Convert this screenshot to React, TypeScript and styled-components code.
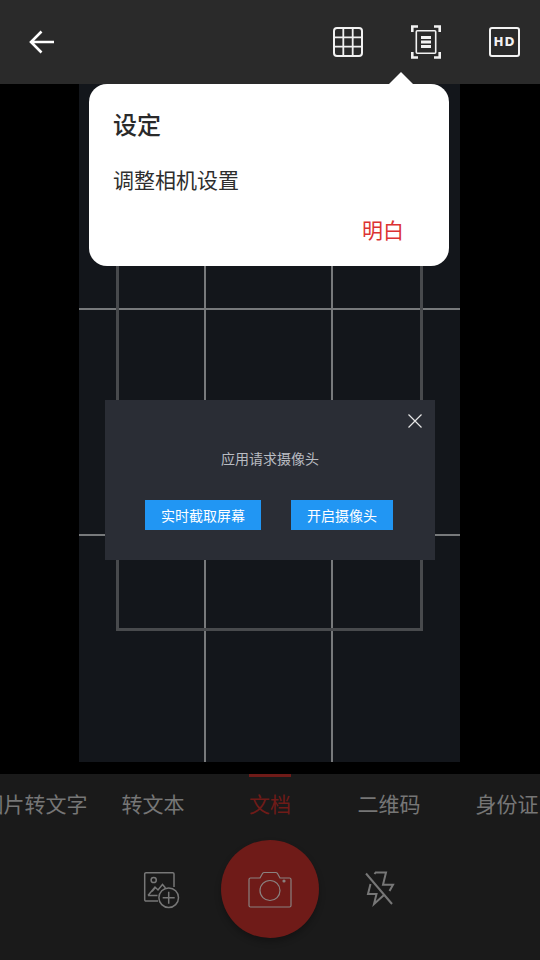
import styled, { createGlobalStyle } from "styled-components";

const tabs = ["图片转文字", "转文本", "文档", "二维码", "身份证"];
const activeTab = "文档";

const App = () => {
  return (
    <>
      <GlobalStyle />
      <Page>
        <TopBar>
          <IconButton aria-label="返回">
            <svg width="26" height="26" viewBox="0 0 26 26" fill="none" stroke="#fff" strokeWidth="2.6">
              <path d="M2 13h23M12.5 2.5 2 13l10.500 10.500" />
            </svg>
          </IconButton>
          <TopActions>
            <svg width="32" height="32" viewBox="0 0 32 32" fill="none" stroke="#f2f2f2" strokeWidth="2">
              <rect x="2" y="2" width="28" height="28" rx="3" />
              <path d="M11.300 2v28M20.700 2v28M2 11.300h28M2 20.700h28" strokeWidth="1.800" />
            </svg>
            <svg width="32" height="34" viewBox="0 0 32 34" fill="none" stroke="#f2f2f2">
              <path d="M2.300 7V1.500H8M24 1.500h5.700V7M2.300 27v5.500H8M24 32.500h5.700V27" strokeWidth="2.600" />
              <rect x="6.300" y="5.800" width="19.400" height="22.400" rx="1" strokeWidth="1.600" />
              <path d="M11 12.500h10M11 17h10M11 21.500h10" strokeWidth="2.800" />
            </svg>
            <HdBadge>HD</HdBadge>
          </TopActions>
        </TopBar>

        <Stage>
          <Frame>
            <ThirdsGrid>
              {Array.from({ length: 9 }, (_, i) => (
                <GridCell key={i} $col={i % 3} $row={Math.floor(i / 3)} />
              ))}
            </ThirdsGrid>
            <DocOutline />
          </Frame>
        </Stage>

        <BottomBar>
          <TabRow>
            {tabs.map((tab) => (
              <Tab key={tab} $active={tab === activeTab}>
                {tab}
              </Tab>
            ))}
          </TabRow>
          <Controls>
            <GalleryIcon width="38" height="40" viewBox="0 0 38 40" fill="none" stroke="#777" strokeWidth="1.500">
              <path d="M15 32H3a1.300 1.300 0 0 1-1.300-1.300V5A1.300 1.300 0 0 1 3 3.700h26.700A1.300 1.300 0 0 1 31 5v13" />
              <circle cx="10.700" cy="11" r="2.600" />
              <path d="M5 26.500 12 18l3 3 4.500-5.500 3 3.500M5 26.500h9.500M9 22.500l3-3.500" />
              <circle cx="25.700" cy="28.700" r="9.800" fill="#1a1a1a" />
              <path d="M25.700 22.700v12M19.700 28.700h12" />
            </GalleryIcon>
            <CaptureButton aria-label="拍照">
              <svg width="44" height="37" viewBox="0 0 44 37" fill="none" stroke="#8a8280" strokeWidth="1.200">
                <path d="M2.500 7H12l2.500-4.500c.4-.7 1-1 1.800-1h11.400c.8 0 1.400.3 1.800 1L32 7h9.500A1.500 1.500 0 0 1 43 8.500v26a1.500 1.500 0 0 1-1.500 1.500h-39A1.500 1.500 0 0 1 1 34.500v-26A1.500 1.500 0 0 1 2.500 7Z" />
                <circle cx="22" cy="19.500" r="10" />
                <circle cx="36" cy="10" r="1" fill="#8a8280" />
              </svg>
            </CaptureButton>
            <FlashIcon width="30" height="36" viewBox="0 0 30 36" fill="none" stroke="#777" strokeWidth="2">
              <path d="M1 2.500 27 33" />
              <path d="M9.500 3l1.200-1.500H21L18 13.700h10l-3.500 6.300M19 24 9 33l2.500-10H3l2.500-10" />
            </FlashIcon>
          </Controls>
        </BottomBar>

        <Popover>
          <PopoverTitle>设定</PopoverTitle>
          <PopoverText>调整相机设置</PopoverText>
          <PopoverAction>明白</PopoverAction>
        </Popover>

        <Dialog>
          <CloseButton aria-label="关闭">
            <svg width="16" height="16" viewBox="0 0 16 16" fill="none" stroke="#e6e6e6" strokeWidth="1.200">
              <path d="M1.500 1.500l13 13M14.500 1.500l-13 13" />
            </svg>
          </CloseButton>
          <DialogText>应用请求摄像头</DialogText>
          <DialogActions>
            <DialogButton>实时截取屏幕</DialogButton>
            <DialogButton>开启摄像头</DialogButton>
          </DialogActions>
        </Dialog>
      </Page>
    </>
  );
};

export default App;

const GlobalStyle = createGlobalStyle`
  html, body {
    margin: 0;
    padding: 0;
    background: #000;
  }
  * {
    box-sizing: border-box;
  }
  body {
    font-family: "Noto Sans CJK SC", "Noto Sans", sans-serif;
  }
`;

const Page = styled.div`
  position: relative;
  display: flex;
  flex-direction: column;
  width: 540px;
  height: 960px;
  overflow: hidden;
  background-color: #000;
`;

const TopBar = styled.header`
  display: flex;
  align-items: center;
  justify-content: space-between;
  flex: 0 0 84px;
  padding: 0 20px 0 29px;
  background-color: #2a2a2a;
`;

const IconButton = styled.div`
  display: flex;
  align-items: center;
  justify-content: center;
`;

const TopActions = styled.div`
  display: flex;
  align-items: center;
  gap: 46px;
`;

const HdBadge = styled.div`
  display: flex;
  align-items: center;
  justify-content: center;
  width: 31px;
  height: 30px;
  margin-left: 1px;
  border: 2px solid #f2f2f2;
  border-radius: 3px;
  color: #f2f2f2;
  font-family: "DejaVu Sans", sans-serif;
  font-size: 12px;
  font-weight: 700;
  letter-spacing: 1px;
`;

const Stage = styled.main`
  display: flex;
  justify-content: center;
  flex: 1;
  padding: 0 80px 12px 79px;
`;

const Frame = styled.div`
  position: relative;
  width: 381px;
  height: 100%;
  background-color: #13161b;
`;

const ThirdsGrid = styled.div`
  display: grid;
  grid-template-columns: 127px 127px 127px;
  grid-template-rows: 226px 226px 226px;
  height: 100%;
`;

const GridCell = styled.div<{ $col: number; $row: number }>`
  border-right: ${({ $col }) => ($col < 2 ? "2px solid #77797b" : "none")};
  border-bottom: ${({ $row }) => ($row < 2 ? "2px solid #77797b" : "none")};
`;

const DocOutline = styled.div`
  position: absolute;
  top: 130px;
  left: 37px;
  width: 307px;
  height: 417px;
  border: 3px solid #484a4d;
`;

const BottomBar = styled.footer`
  display: flex;
  flex-direction: column;
  flex: 0 0 186px;
  background-color: #1a1a1a;
`;

const TabRow = styled.nav`
  display: flex;
  justify-content: center;
  height: 66px;
`;

const Tab = styled.div<{ $active: boolean }>`
  display: flex;
  justify-content: center;
  flex: 0 0 118px;
  position: relative;
  padding-top: 14px;
  padding-left: ${({ $active }) => ($active ? "0" : "2px")};
  color: ${({ $active }) => ($active ? "#6f1b18" : "#767676")};
  font-size: 21px;
  line-height: 30px;
  white-space: nowrap;

  &::before {
    content: "";
    display: ${({ $active }) => ($active ? "block" : "none")};
    position: absolute;
    top: 0;
    left: 38px;
    width: 42px;
    height: 3px;
    background-color: #6f1b18;
  }
`;

const Controls = styled.div`
  display: grid;
  grid-template-columns: 1fr 98px 1fr;
  align-items: center;
  height: 98px;
`;

const GalleryIcon = styled.svg`
  justify-self: end;
  margin-right: 40px;
`;

const FlashIcon = styled.svg`
  justify-self: start;
  margin-left: 46px;
`;

const CaptureButton = styled.div`
  display: flex;
  align-items: center;
  justify-content: center;
  width: 98px;
  height: 98px;
  border-radius: 50%;
  background-color: #6f1b18;
  box-shadow: 0 4px 6px rgba(0, 0, 0, 0.25);
`;

const Popover = styled.div`
  position: absolute;
  top: 84px;
  left: 89px;
  display: flex;
  flex-direction: column;
  width: 360px;
  height: 182px;
  padding: 23px 25px 0 24px;
  border-radius: 18px;
  background-color: #fff;

  &::before {
    content: "";
    position: absolute;
    top: -12px;
    left: 300px;
    width: 24px;
    height: 12px;
    background-color: #fff;
    clip-path: polygon(50% 0, 100% 100%, 0 100%);
  }
`;

const PopoverTitle = styled.div`
  color: #2a2a2a;
  font-size: 24px;
  font-weight: 500;
  line-height: 34px;
`;

const PopoverText = styled.div`
  margin-top: 23px;
  color: #2e2e2e;
  font-size: 21px;
  line-height: 30px;
`;

const PopoverAction = styled.div`
  align-self: flex-end;
  margin-top: 20px;
  margin-right: 20px;
  color: #dc3232;
  font-size: 21px;
  line-height: 30px;
`;

const Dialog = styled.div`
  position: absolute;
  top: 400px;
  left: 105px;
  display: flex;
  flex-direction: column;
  align-items: center;
  width: 330px;
  height: 160px;
  padding-top: 48px;
  background-color: #2a2d35;
`;

const CloseButton = styled.div`
  position: absolute;
  top: 13px;
  right: 12px;
  display: flex;
`;

const DialogText = styled.div`
  color: #b9bcc2;
  font-size: 14px;
  line-height: 20px;
`;

const DialogActions = styled.div`
  display: flex;
  gap: 30px;
  margin-top: 32px;
  margin-right: 2px;
`;

const DialogButton = styled.div`
  padding: 0 16px;
  background-color: #2196f3;
  color: #fff;
  font-size: 14px;
  line-height: 30px;
`;
